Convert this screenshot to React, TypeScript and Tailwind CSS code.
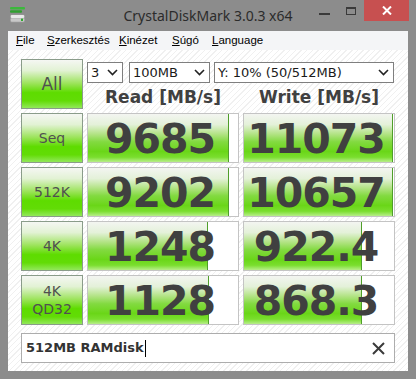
import React from "react";

const sans = { fontFamily: '"DejaVu Sans", Verdana, sans-serif' };
const ui = { fontFamily: '"Noto Sans", "Open Sans", sans-serif' };
const menuFont = { fontFamily: '"Liberation Sans", Arial, sans-serif' };

function Chevron() {
  return (
    <svg width="11" height="7" viewBox="0 0 11 7" className="shrink-0">
      <path d="M1 1 L5.5 5.5 L10 1" fill="none" stroke="#222" strokeWidth="1.6" />
    </svg>
  );
}

function Select({ w, text }: { w: string; text: string }) {
  return (
    <div
      className={`${w} h-[21px] border border-[#7f7f7f] bg-white flex items-center justify-between pl-[3px] pr-[4px] text-[13px] text-[#1a1a1a]`}
      style={sans}
    >
      <span className="leading-none">{text}</span>
      <Chevron />
    </div>
  );
}

function SideButton({ children, h = "h-[50px]" }: { children: React.ReactNode; h?: string }) {
  return (
    <div
      className={`${h} w-[62px] border border-[#8a9c8a] bg-[linear-gradient(to_bottom,#f5f7f3_0%,#e2f2d4_22%,#9ee45e_48%,#5edc00_68%,#62dc06_85%,#92e85a_100%)] flex flex-col items-center justify-center text-[#505050] leading-[18px]`}
      style={sans}
    >
      {children}
    </div>
  );
}

function Cell({ value, fill }: { value: string; fill: number }) {
  return (
    <div className="relative h-[50px] w-[152px] border border-[#c4c4c4] bg-white overflow-hidden">
      <div
        className="absolute left-0 top-0 bottom-0 border-r border-[#4f9e2a] bg-[linear-gradient(to_bottom,#f3f5f1_0%,#e4f1d9_22%,#b2e384_42%,#82da40_58%,#6ad618_78%,#7ade2e_90%,#b8ee8a_100%)]"
        style={{ width: fill }}
      />
      <div
        className="relative h-full flex items-center justify-center pr-[6px] pt-[3px] text-[41px] font-bold tracking-[-1px] text-[#404040]"
        style={sans}
      >
        {value}
      </div>
    </div>
  );
}

function AppIcon() {
  return (
    <svg width="16" height="16" viewBox="0 0 16 16">
      <rect x="0" y="0" width="15" height="2.5" rx="1" fill="#3cb83c" />
      <rect x="0" y="3.2" width="12" height="2.5" rx="1" fill="#2fa02f" />
      <rect x="0" y="7.5" width="15" height="8" rx="1.5" fill="#9a9a9a" />
      <rect x="0.8" y="8" width="13.4" height="3" rx="1" fill="#e8e8e8" />
      <rect x="0.8" y="11.2" width="13.4" height="3.6" rx="1" fill="#c8c8c8" />
      <rect x="11" y="11.6" width="2" height="2.4" fill="#2faa2f" />
    </svg>
  );
}

export default function App() {
  const rows = [
    { label: <span className="text-[14px]">Seq</span>, r: "9685", rf: 141, w: "11073", wf: 149 },
    { label: <span className="text-[14px]">512K</span>, r: "9202", rf: 141, w: "10657", wf: 149 },
    { label: <span className="text-[14px]">4K</span>, r: "1248", rf: 120, w: "922.4", wf: 118 },
    {
      label: (
        <>
          <span className="text-[14px]">4K</span>
          <span className="text-[14px]">QD32</span>
        </>
      ),
      r: "1128",
      rf: 121,
      w: "868.3",
      wf: 118,
    },
  ];

  return (
    <div className="w-[416px] h-[379px] bg-[#8c8c8c] flex flex-col overflow-hidden">
      {/* Title bar */}
      <div className="h-[31px] grid grid-cols-[97px_1fr_97px] shrink-0">
        <div className="pl-[10px] pt-[7px]">
          <AppIcon />
        </div>
        <div className="flex items-center justify-center pb-[1px] text-[14px] text-[#2b2b2b]" style={ui}>
          CrystalDiskMark 3.0.3 x64
        </div>
        <div className="flex items-start">
          <div className="w-[11px] h-[21px] flex items-start pt-[13px]">
            <div className="w-[11px] h-[2px] bg-[#3a3a3a]" />
          </div>
          <div className="ml-[16px] mt-[7px] w-[10px] h-[8px] border border-t-2 border-[#3a3a3a]" />
          <div className="ml-[8px] w-[45px] h-[21px] bg-[#c75050] flex items-center justify-center">
            <svg width="10" height="9" viewBox="0 0 10 9">
              <path d="M1 0.5 L9 8.5 M9 0.5 L1 8.5" stroke="#fff" strokeWidth="2" />
            </svg>
          </div>
        </div>
      </div>

      {/* Client */}
      <div className="mx-[8px] mb-[8px] flex-1 flex flex-col">
        {/* Menu */}
        <div className="h-[19px] bg-[#f4f5f7] flex items-center pl-[8px] text-[11.5px] text-black shrink-0 whitespace-nowrap" style={menuFont}>
          <span className="w-[31px] shrink-0"><u>F</u>ile</span>
          <span className="w-[72px] shrink-0"><u>S</u>zerkesztés</span>
          <span className="w-[53px] shrink-0"><u>K</u>inézet</span>
          <span className="w-[40px] shrink-0"><u>S</u>úgó</span>
          <span className="shrink-0"><u>L</u>anguage</span>
        </div>

        {/* Content */}
        <div className="flex-1 bg-[repeating-linear-gradient(135deg,#ffffff_0px,#ffffff_3px,#f0f0f0_3px,#f0f0f0_4px)] pl-[13px] pr-[13px] pt-[9px] flex flex-col">
          <div className="flex gap-[4px]">
            <SideButton>
              <span className="text-[17px]">All</span>
            </SideButton>
            <div className="flex flex-col w-[308px]">
              <div className="mt-[3px] flex">
                <Select w="w-[36px]" text="3" />
                <div className="ml-[6px]">
                  <Select w="w-[81px]" text="100MB" />
                </div>
                <div className="ml-[4px]">
                  <Select w="w-[180px]" text="Y: 10% (50/512MB)" />
                </div>
              </div>
              <div className="flex gap-[4px] mt-[3px] h-[23px] items-center text-[17px] font-bold text-[#404040]" style={sans}>
                <div className="w-[152px] text-center">Read [MB/s]</div>
                <div className="w-[152px] text-center">Write [MB/s]</div>
              </div>
            </div>
          </div>

          <div className="mt-[4px] flex flex-col gap-[4px]">
            {rows.map((row, i) => (
              <div key={i} className="flex gap-[4px]">
                <SideButton>{row.label}</SideButton>
                <Cell value={row.r} fill={row.rf} />
                <Cell value={row.w} fill={row.wf} />
              </div>
            ))}
          </div>

          <div className="mt-[8px] h-[30px] w-[374px] border border-[#adadad] bg-white flex items-center justify-between pl-[4px] pr-[9px]">
            <div className="flex items-center text-[13px] font-bold text-[#333]" style={sans}>
              <span>512MB RAMdisk</span>
              <span className="ml-[1px] w-[1px] h-[17px] bg-black" />
            </div>
            <svg width="13" height="13" viewBox="0 0 13 13">
              <path d="M1 1 L12 12 M12 1 L1 12" stroke="#3a3a3a" strokeWidth="2" />
            </svg>
          </div>
        </div>
      </div>
    </div>
  );
}
